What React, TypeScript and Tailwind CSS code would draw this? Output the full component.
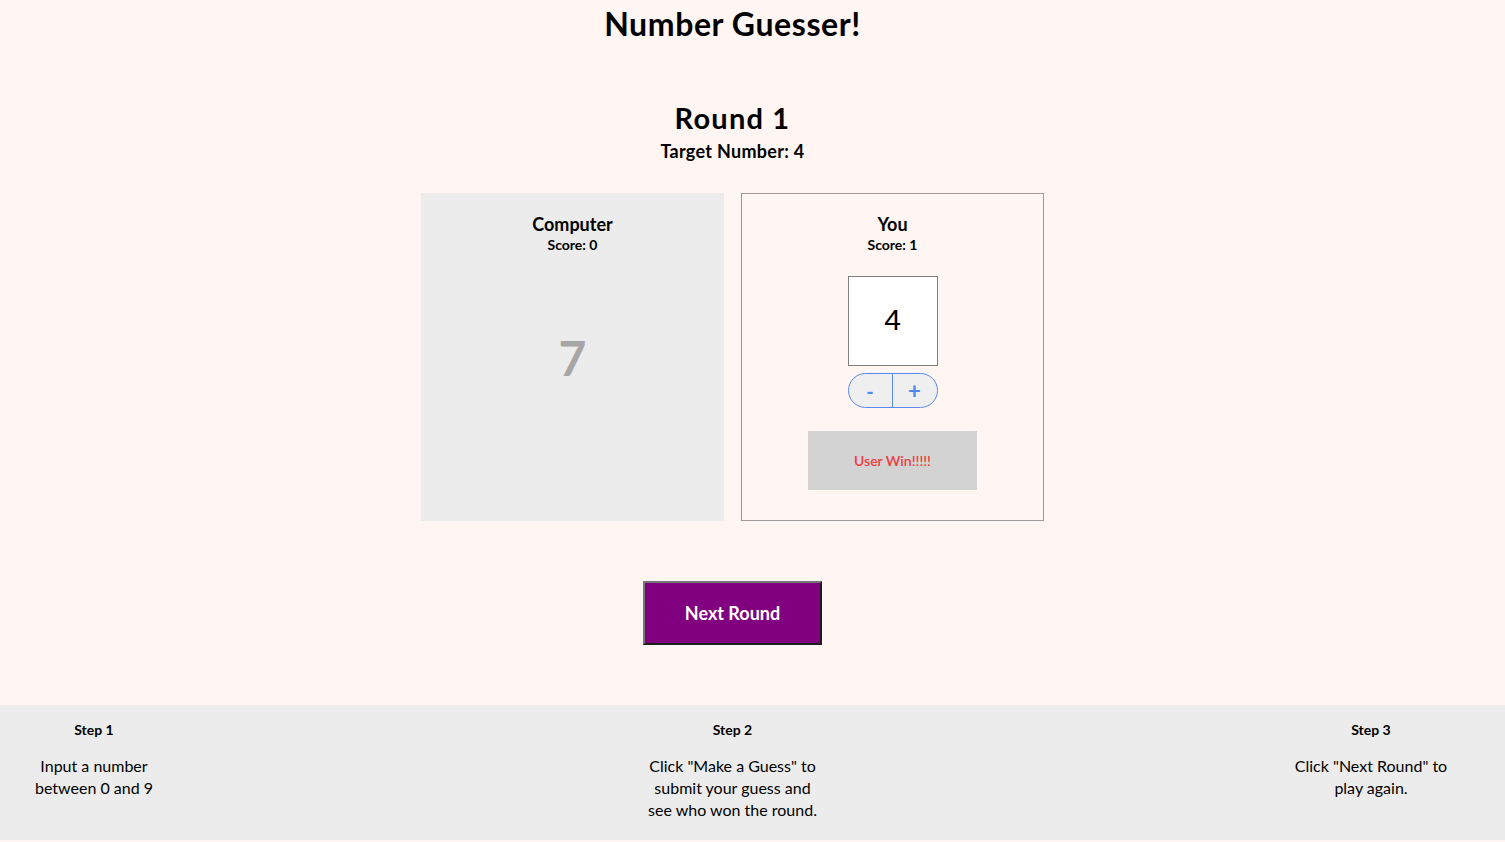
import React from "react";

export default function App() {
  const font = { fontFamily: "Lato, 'Noto Sans', sans-serif" };
  return (
    <div className="min-h-[842px] w-full bg-[#fff6f4] text-black" style={font}>
      <div className="w-[1465px] flex flex-col items-center text-center">
        <h1 className="text-[32px] font-bold leading-[48px] tracking-[0.6px]">Number Guesser!</h1>
        <h2 className="mt-[52px] text-[29px] font-bold leading-[36px] tracking-[1.2px]">Round 1</h2>
        <div className="mt-[3px] text-[18px] font-bold leading-[24px] tracking-[0.3px]">Target Number: 4</div>

        <div className="mt-[30px] flex gap-[17px]">
          <div className="w-[303px] h-[328px] bg-[#ececec] flex flex-col items-center pt-[21px]">
            <div className="text-[18px] font-bold leading-[20px]">Computer</div>
            <div className="text-[14px] font-bold leading-[20px] mt-[1px]">Score: 0</div>
            <div className="mt-[75px] text-[48px] font-bold leading-[56px] text-[#a6a6a6]">7</div>
          </div>
          <div className="w-[303px] h-[328px] border border-[#9a9a9a] flex flex-col items-center pt-[20px]">
            <div className="text-[18px] font-bold leading-[20px]">You</div>
            <div className="text-[14px] font-bold leading-[20px] mt-[1px]">Score: 1</div>
            <div
              className="mt-[21px] w-[90px] h-[90px] bg-white border border-[#808080] flex items-center justify-center text-[30px] leading-none pb-[2px]"
              style={{ fontFamily: "'Liberation Sans', Arial, sans-serif" }}
            >
              4
            </div>
            <div className="mt-[7px] w-[90px] h-[35px] rounded-full border border-[#5a8cf0] bg-[#efefef] flex overflow-hidden">
              <div className="w-1/2 h-full flex items-center justify-center text-[#4f86f0] text-[20px] font-bold border-r border-[#5a8cf0]">-</div>
              <div className="w-1/2 h-full flex items-center justify-center text-[#4f86f0] text-[22px] font-bold">+</div>
            </div>
            <div className="mt-[23px] w-[169px] h-[59px] bg-[#d3d3d3] flex items-center justify-center text-[14px] text-[#ef3b40] font-semibold">
              User Win!!!!!
            </div>
          </div>
        </div>

        <button className="mt-[60px] w-[179px] h-[64px] bg-[#800080] text-white text-[18px] font-bold border-2 border-t-[#767676] border-l-[#767676] border-r-[#1e1e1e] border-b-[#1e1e1e]">
          Next Round
        </button>
      </div>

      <div className="mt-[60px] w-full h-[135px] bg-[#ececec]">
        <div className="w-[1465px] flex justify-between text-center">
          <div className="w-[188px] pt-[15px]">
            <div className="text-[14px] font-bold leading-[20px]">Step 1</div>
            <div className="mt-[15px] text-[16px] leading-[22px]">
              Input a number
              <br />
              between 0 and 9
            </div>
          </div>
          <div className="w-[188px] pt-[15px]">
            <div className="text-[14px] font-bold leading-[20px]">Step 2</div>
            <div className="mt-[15px] text-[16px] leading-[22px]">
              Click "Make a Guess" to
              <br />
              submit your guess and
              <br />
              see who won the round.
            </div>
          </div>
          <div className="w-[188px] pt-[15px]">
            <div className="text-[14px] font-bold leading-[20px]">Step 3</div>
            <div className="mt-[15px] text-[16px] leading-[22px]">
              Click "Next Round" to
              <br />
              play again.
            </div>
          </div>
        </div>
      </div>
    </div>
  );
}
